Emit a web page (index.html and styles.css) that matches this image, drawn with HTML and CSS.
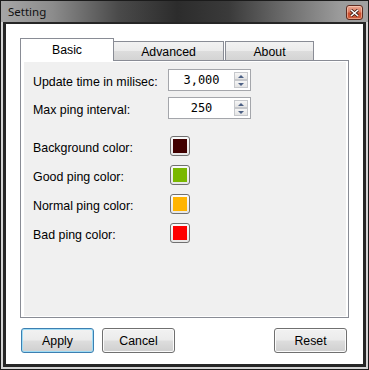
FILE: index.html
```html
<!DOCTYPE html>
<html lang="en">
<head>
    <meta charset="UTF-8">
    <title>Setting</title>
    <link rel="stylesheet" href="styles.css">
</head>
<body>

    <div class="window">

        <div class="titlebar">
            <span class="title">Setting</span>
            <span class="close">
                <svg width="9" height="8" viewBox="0 0 9 8">
                    <path d="M1 1 L8 7 M8 1 L1 7" stroke="#3a1a12" stroke-width="3"/>
                    <path d="M1 1 L8 7 M8 1 L1 7" stroke="#ffffff" stroke-width="1.6"/>
                </svg>
            </span>
        </div>

        <div class="client">

            <div class="tabs">
                <div class="tab-strip">
                    <div class="tab active">Basic</div>
                    <div class="tab tab-adv">Advanced</div>
                    <div class="tab tab-about">About</div>
                </div>

                <div class="panel">
                    <div class="page">

                        <div class="row">
                            <p class="label">Update time in milisec:</p>
                            <div class="numeric">
                                <span class="value">3,000</span>
                                <div class="spin">
                                    <span class="spin-btn"><i class="arrow up"></i></span>
                                    <span class="spin-btn"><i class="arrow down"></i></span>
                                </div>
                            </div>
                        </div>

                        <div class="row">
                            <p class="label">Max ping interval:</p>
                            <div class="numeric">
                                <span class="value">250</span>
                                <div class="spin">
                                    <span class="spin-btn"><i class="arrow up"></i></span>
                                    <span class="spin-btn"><i class="arrow down"></i></span>
                                </div>
                            </div>
                        </div>

                        <div class="colors">
                            <div class="color-row">
                                <p class="label wide">Background color:</p>
                                <span class="swatch"><i class="fill c-bg"></i></span>
                            </div>
                            <div class="color-row">
                                <p class="label wide">Good ping color:</p>
                                <span class="swatch"><i class="fill c-good"></i></span>
                            </div>
                            <div class="color-row">
                                <p class="label wide">Normal ping color:</p>
                                <span class="swatch"><i class="fill c-normal"></i></span>
                            </div>
                            <div class="color-row">
                                <p class="label wide">Bad ping color:</p>
                                <span class="swatch"><i class="fill c-bad"></i></span>
                            </div>
                        </div>

                    </div>
                </div>
            </div>

            <div class="buttons">
                <button class="button default">Apply</button>
                <button class="button">Cancel</button>
                <span class="spacer"></span>
                <button class="button">Reset</button>
            </div>

        </div>
    </div>

</body>
</html>
```

FILE: styles.css
```css
body{
    margin: 0;
    background: #ffffff;
    font-family: "Liberation Sans", Arial, sans-serif;
    font-size: 12px;
    color: #000000;
}

p{
    margin: 0;
}

.window{
    width: 369px;
    height: 370px;
    box-sizing: border-box;
    border: 1px solid #1b1b1b;
    background: #d4d4d4;
    padding: 0 2px 2px 2px;
    display: flex;
    flex-direction: column;
}

.titlebar{
    margin: 0 -2px;
    height: 21px;
    flex: none;
    display: flex;
    justify-content: space-between;
    align-items: flex-start;
    background: linear-gradient(90deg, #a6a6a6 0%, #8c8c8c 14%, #4a4a4a 32%, #2c2c2c 48%, #3a3a3a 62%, #6e6e6e 78%, #9a9a9a 92%, #a2a2a2 100%);
}

.title{
    font-family: "Noto Sans", "Open Sans", sans-serif;
    font-size: 11.5px;
    color: #111111;
    padding: 3px 0 0 7px;
}

.close{
    width: 17px;
    height: 15px;
    margin: 4px 5px 0 0;
    box-sizing: border-box;
    border: 1px solid #5e2b20;
    border-radius: 3px;
    background: linear-gradient(#eaa893 0%, #dc7a60 45%, #c94a2c 55%, #d0603f 100%);
    box-shadow: inset 0 0 0 1px rgba(255, 220, 200, 0.5);
    display: flex;
    align-items: center;
    justify-content: center;
}

.client{
    flex: 1;
    background: #ffffff;
    border: 3px solid #262626;
    border-top-width: 2px;
    padding: 14px 14px 0 14px;
    display: flex;
    flex-direction: column;
}

/* tab control */

.tab-strip{
    display: flex;
    align-items: flex-end;
    height: 22px;
}

.tab{
    box-sizing: border-box;
    height: 19px;
    border: 1px solid #898c95;
    border-bottom: none;
    background: linear-gradient(#f2f2f2 0%, #ebebeb 50%, #dddddd 50%, #d4d4d4 100%);
    text-align: center;
    line-height: 20px;
    font-size: 12.3px;
}

.tab.active{
    width: 94px;
    height: 23px;
    margin-bottom: -1px;
    background: #ffffff;
    line-height: 22px;
    position: relative;
    z-index: 1;
}

.tab-adv{
    width: 111px;
    margin-left: -1px;
}

.tab-about{
    width: 89px;
    margin-left: 1px;
}

.panel{
    height: 258px;
    box-sizing: border-box;
    border: 1px solid #898c95;
    background: #ffffff;
    padding: 1px 2px 1px 3px;
}

.page{
    height: 100%;
    background: #f0f0f0;
    padding: 7px 0 0 9px;
    box-sizing: border-box;
}

.row{
    display: flex;
    align-items: center;
    height: 22px;
    margin-bottom: 6px;
}

.label{
    width: 135px;
    padding-top: 3px;
    font-size: 12.4px;
}

.label.wide{
    width: 137px;
}

.numeric{
    width: 83px;
    height: 22px;
    box-sizing: border-box;
    border: 1px solid #a4a6ab;
    background: #ffffff;
    display: flex;
    padding: 2px 2px 2px 0;
}

.value{
    flex: 1;
    text-align: center;
    font-family: "DejaVu Sans Mono", "Liberation Mono", monospace;
    font-size: 12px;
    line-height: 17px;
}

.spin{
    width: 14px;
    display: flex;
    flex-direction: column;
}

.spin-btn{
    height: 8px;
    box-sizing: border-box;
    border: 1px solid #c6c8cc;
    background: linear-gradient(#f6f6f6, #e4e4e4);
    display: flex;
    align-items: center;
    justify-content: center;
}

.arrow{
    width: 0;
    height: 0;
    border-left: 3px solid transparent;
    border-right: 3px solid transparent;
}

.arrow.up{
    border-bottom: 3px solid #4d6185;
}

.arrow.down{
    border-top: 3px solid #4d6185;
}

.colors{
    padding-top: 11px;
}

.color-row{
    display: flex;
    align-items: center;
    height: 20px;
    margin-bottom: 9px;
}

.swatch{
    width: 20px;
    height: 20px;
    box-sizing: border-box;
    border: 1px solid #707070;
    border-radius: 3px;
    background: linear-gradient(#fafafa, #e6e6e6);
    padding: 2px;
}

.fill{
    display: block;
    width: 14px;
    height: 14px;
}

.c-bg{ background: #400000; }
.c-good{ background: #7ab800; }
.c-normal{ background: #ffb400; }
.c-bad{ background: #ff0000; }

/* bottom buttons */

.buttons{
    display: flex;
    margin-top: 10px;
    padding: 0 2px 0 1px;
    gap: 8px;
}

.spacer{
    flex: 1;
}

.button{
    width: 73px;
    height: 25px;
    box-sizing: border-box;
    font-family: "Liberation Sans", Arial, sans-serif;
    font-size: 12.3px;
    color: #000000;
    border: 1px solid #707070;
    border-radius: 3px;
    background: linear-gradient(#f2f2f2 0%, #ebebeb 48%, #dddddd 52%, #cfcfcf 100%);
    box-shadow: inset 0 0 0 1px #fbfbfb;
    padding: 0;
}

.button.default{
    border-color: #3c7fb1;
    box-shadow: inset 0 0 0 1px #9fdcf5;
}
```
